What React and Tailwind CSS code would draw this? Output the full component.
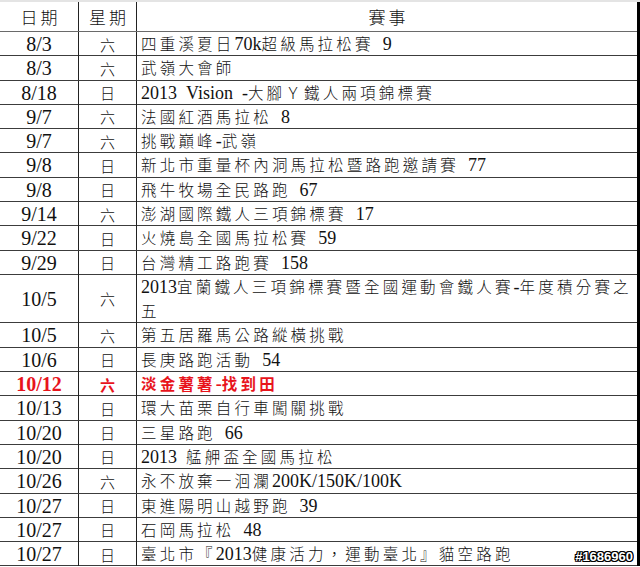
import React from 'react';

const rows = [
  ['8/3', '六', '四重溪夏日70k超級馬拉松賽 9'],
  ['8/3', '六', '武嶺大會師'],
  ['8/18', '日', '2013 Vision -大腳Ｙ鐵人兩項錦標賽'],
  ['9/7', '六', '法國紅酒馬拉松 8'],
  ['9/7', '六', '挑戰巔峰-武嶺'],
  ['9/8', '日', '新北市重量杯內洞馬拉松暨路跑邀請賽 77'],
  ['9/8', '日', '飛牛牧場全民路跑 67'],
  ['9/14', '六', '澎湖國際鐵人三項錦標賽 17'],
  ['9/22', '日', '火燒島全國馬拉松賽 59'],
  ['9/29', '日', '台灣精工路跑賽 158'],
  ['10/5', '六', ['2013宜蘭鐵人三項錦標賽暨全國運動會鐵人賽-年度積分賽之', '五'], 'tall'],
  ['10/5', '六', '第五居羅馬公路縱橫挑戰'],
  ['10/6', '日', '長庚路跑活動 54'],
  ['10/12', '六', '淡金薯薯-找到田', 'red'],
  ['10/13', '日', '環大苗栗自行車闖關挑戰'],
  ['10/20', '日', '三星路跑 66'],
  ['10/20', '日', '2013 艋舺盃全國馬拉松'],
  ['10/26', '六', '永不放棄一洄瀾200K/150K/100K'],
  ['10/27', '日', '東進陽明山越野跑 39'],
  ['10/27', '日', '石岡馬拉松 48'],
  ['10/27', '日', '臺北市『2013健康活力，運動臺北』貓空路跑'],
];

// half-width runs in a Times-like face, full-width in the CJK face
function Mixed({ text, bold }) {
  const parts = text.match(/[\x00-\x7f]+|[^\x00-\x7f]+/g) || [];
  return parts.map((p, i) =>
    /^[\x00-\x7f]/.test(p) ? (
      <span key={i} className="font-['Liberation_Serif',serif] text-[18px] tracking-normal">
        {p.replace(/ /g, '\u2002')}
      </span>
    ) : (
      <span
        key={i}
        className={`font-['Noto_Sans_CJK_TC',sans-serif] text-[15.5px] tracking-[3.2px] ${
          bold ? 'font-bold' : 'font-light'
        }`}
      >
        {p}
      </span>
    )
  );
}

function Row({ date, day, event, kind }) {
  const red = kind === 'red';
  const tall = kind === 'tall';
  return (
    <div
      className={`grid grid-cols-[79px_58px_1fr] border-b border-[#3c3c3c] ${
        tall ? 'h-[48.5px]' : 'h-[24.3px]'
      } ${red ? 'text-[#e8141c] font-bold' : 'text-[#111]'}`}
    >
      <div className="flex items-center justify-center border-r border-[#222] font-['Liberation_Serif',serif] text-[20px] leading-none">
        {date}
      </div>
      <div
        className={`flex items-center justify-center border-r border-[#222] font-['Noto_Sans_CJK_TC',sans-serif] text-[15px] leading-none ${
          red ? 'font-bold' : 'font-light'
        }`}
      >
        {day}
      </div>
      <div className="flex flex-col justify-center pl-[4px] leading-[23px] whitespace-nowrap">
        {Array.isArray(event) ? (
          event.map((line, i) => (
            <div key={i}>
              <Mixed text={line} bold={red} />
            </div>
          ))
        ) : (
          <div>
            <Mixed text={event} bold={red} />
          </div>
        )}
      </div>
    </div>
  );
}

export default function App() {
  return (
    <div className="relative w-[640px] h-[567px] bg-white overflow-hidden">
      <div className="h-[2px] bg-[#e4e4e4]" />
      <div className="w-[640px] border-r-[3px] border-black">
        <div className="grid grid-cols-[79px_58px_1fr] h-[30px] border-b border-[#6a6a6a] font-['Noto_Sans_CJK_TC',sans-serif] font-light text-[17px] text-[#111] leading-none">
          <div className="flex items-center justify-center border-r border-[#222] tracking-[3px] pl-[3px]">日期</div>
          <div className="flex items-center justify-center border-r border-[#222] tracking-[3px] pl-[3px]">星期</div>
          <div className="flex items-center justify-center tracking-[3px] pl-[3px]">賽事</div>
        </div>
        {rows.map(([date, day, event, kind], i) => (
          <Row key={i} date={date} day={day} event={event} kind={kind} />
        ))}
      </div>
      <div className="absolute right-[7px] bottom-[4px] font-['Liberation_Sans',sans-serif] font-bold text-[13px] leading-none text-white [text-shadow:1px_0_#000,-1px_0_#000,0_1px_#000,0_-1px_#000,1px_1px_#000,-1px_-1px_#000,1px_-1px_#000,-1px_1px_#000]">
        #1686960
      </div>
    </div>
  );
}
